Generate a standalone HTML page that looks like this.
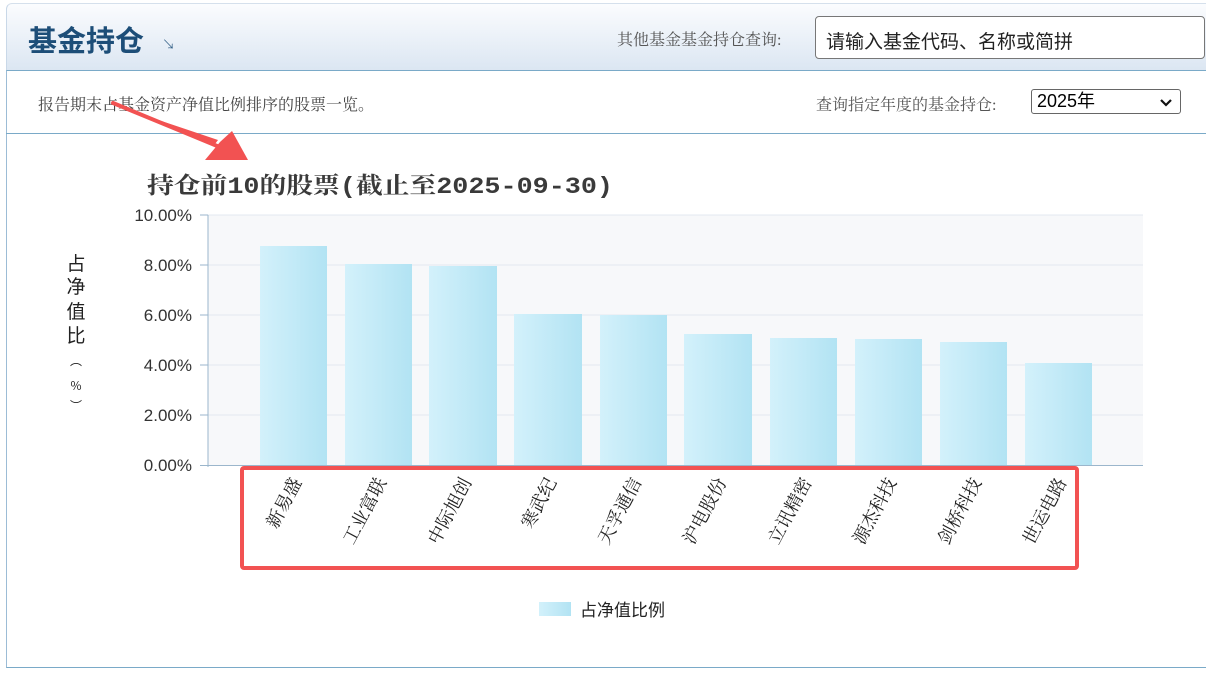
<!DOCTYPE html>
<html><head><meta charset="utf-8"><style>
body{margin:0;width:1206px;height:675px;overflow:hidden;background:#fff;font-family:"Liberation Serif","Noto Serif CJK SC",serif;position:relative}
.hdr{position:absolute;left:6px;top:3px;width:1200px;height:67px;background:linear-gradient(#fbfcfe,#dbe6f2);border-top:1px solid #d5e0ec;border-left:1px solid #c9d8e8;border-radius:6px 0 0 0}
.t{position:absolute;left:28px;top:18px;font:bold 29px "Liberation Sans","Noto Sans CJK SC",sans-serif;color:#1d4e78}
.ar{position:absolute;left:162px;top:34px;font-size:13px;font-weight:bold;color:#1d4e78}
.q{position:absolute;left:617px;top:27px;font-size:16px;color:#555}
.in{position:absolute;left:815px;top:16px;width:390px;height:43px;border:1px solid #777;border-radius:4px;background:#fff;box-sizing:border-box;font:19px "Liberation Sans","Noto Sans CJK SC",sans-serif;padding:10px 10px;color:#222}
.box{position:absolute;left:6px;top:70px;width:1200px;height:596px;border-top:1px solid #7aaac8;border-left:1px solid #9cbcd6;border-bottom:1px solid #7aaac8}
.l1{position:absolute;left:6px;top:133px;width:1200px;border-top:1px solid #7aaac8}
.d{position:absolute;left:38px;top:92px;font-size:16px;color:#444}
.d2{position:absolute;left:816px;top:92px;font-size:16px;color:#555}
.sel{position:absolute;left:1031px;top:89px;width:150px;height:25px;border:1px solid #666;border-radius:3px;box-sizing:border-box;font:18px "Liberation Sans","Noto Sans CJK SC",sans-serif;padding:0 5px;line-height:23px}
</style></head><body>
<div class="hdr"></div>
<div class="t">基金持仓</div><div class="ar">↘</div>
<div class="q">其他基金基金持仓查询:</div>
<div class="in">请输入基金代码、名称或简拼</div>
<div class="box"></div><div class="l1"></div>
<div class="d">报告期末占基金资产净值比例排序的股票一览。</div>
<div class="d2">查询指定年度的基金持仓:</div>
<div class="sel">2025年<svg width="14" height="10" style="position:absolute;right:7px;top:8px"><path d="M2 2 L7 7 L12 2" fill="none" stroke="#111" stroke-width="2.2"/></svg></div>
<svg width="1206" height="675" style="position:absolute;left:0;top:0" xmlns="http://www.w3.org/2000/svg">
<defs><linearGradient id="g" x1="0" x2="1"><stop offset="0" stop-color="#d3f1fb"/><stop offset="1" stop-color="#b2e3f3"/></linearGradient></defs>
<rect x="208" y="215" width="935" height="250" fill="#f7f8fa"/>
<g stroke="#e3e9f0"><line x1="208" x2="1143" y1="215" y2="215"/><line x1="208" x2="1143" y1="265" y2="265"/><line x1="208" x2="1143" y1="315" y2="315"/><line x1="208" x2="1143" y1="365" y2="365"/><line x1="208" x2="1143" y1="415" y2="415"/></g>
<g stroke="#9bb6cc"><line x1="208" x2="208" y1="215" y2="467"/><line x1="200" x2="1143" y1="465.5" y2="465.5"/>
<line x1="200" x2="208" y1="215" y2="215"/><line x1="200" x2="208" y1="265" y2="265"/><line x1="200" x2="208" y1="315" y2="315"/><line x1="200" x2="208" y1="365" y2="365"/><line x1="200" x2="208" y1="415" y2="415"/></g>
<g font-family="Liberation Sans,sans-serif" font-size="17" fill="#333" text-anchor="end">
<text x="192" y="221">10.00%</text><text x="192" y="271">8.00%</text><text x="192" y="321">6.00%</text><text x="192" y="371">4.00%</text><text x="192" y="421">2.00%</text><text x="192" y="471">0.00%</text></g>
<g font-family="Noto Sans CJK SC,sans-serif" font-size="19" fill="#222" text-anchor="middle"><text x="76" y="270">占</text><text x="76" y="293">净</text><text x="76" y="318">值</text><text x="76" y="342">比</text><text x="76" y="365" font-size="12">︵</text><text x="76" y="390" font-size="12">%</text><text x="76" y="410" font-size="12">︶</text></g>
<g fill="url(#g)">
<rect x="260" y="246" width="67" height="219"/><rect x="345" y="264" width="67" height="201"/><rect x="429" y="266" width="68" height="199"/><rect x="514" y="314" width="68" height="151"/><rect x="600" y="315" width="67" height="150"/><rect x="684" y="334" width="68" height="131"/><rect x="770" y="338" width="67" height="127"/><rect x="855" y="339" width="67" height="126"/><rect x="940" y="342" width="67" height="123"/><rect x="1025" y="363" width="67" height="102"/></g>
<text x="147" y="193" font-family="Liberation Mono,Noto Serif CJK SC,serif" font-weight="bold" font-size="23" fill="#3a3a3a" textLength="466" lengthAdjust="spacingAndGlyphs">持仓前10的股票(截止至2025-09-30)</text>
<g font-family="Liberation Serif,Noto Serif CJK SC,serif" font-size="18" fill="#222" text-anchor="end">
<text transform="translate(302,482) rotate(-62)">新易盛</text><text transform="translate(387,482) rotate(-62)">工业富联</text><text transform="translate(472,482) rotate(-62)">中际旭创</text><text transform="translate(557,482) rotate(-62)">寒武纪</text><text transform="translate(642,482) rotate(-62)">天孚通信</text><text transform="translate(727,482) rotate(-62)">沪电股份</text><text transform="translate(812,482) rotate(-62)">立讯精密</text><text transform="translate(897,482) rotate(-62)">源杰科技</text><text transform="translate(982,482) rotate(-62)">剑桥科技</text><text transform="translate(1067,482) rotate(-62)">世运电路</text></g>
<rect x="242" y="468" width="835" height="100" fill="none" stroke="#f25252" stroke-width="4" rx="2"/>
<rect x="539" y="602" width="32" height="14" fill="url(#g)"/>
<text x="580" y="616" font-family="Noto Sans CJK SC,sans-serif" font-size="17" fill="#222">占净值比例</text>
<polygon points="113,101 215,144 218,140 114,105" fill="#f25252"/>
<line x1="113" y1="103" x2="222" y2="148" stroke="#f25252" stroke-width="4" stroke-linecap="round"/>
<polygon points="248,160 205,160 220,142 232,131" fill="#f25252"/>
</svg>
</body></html>
